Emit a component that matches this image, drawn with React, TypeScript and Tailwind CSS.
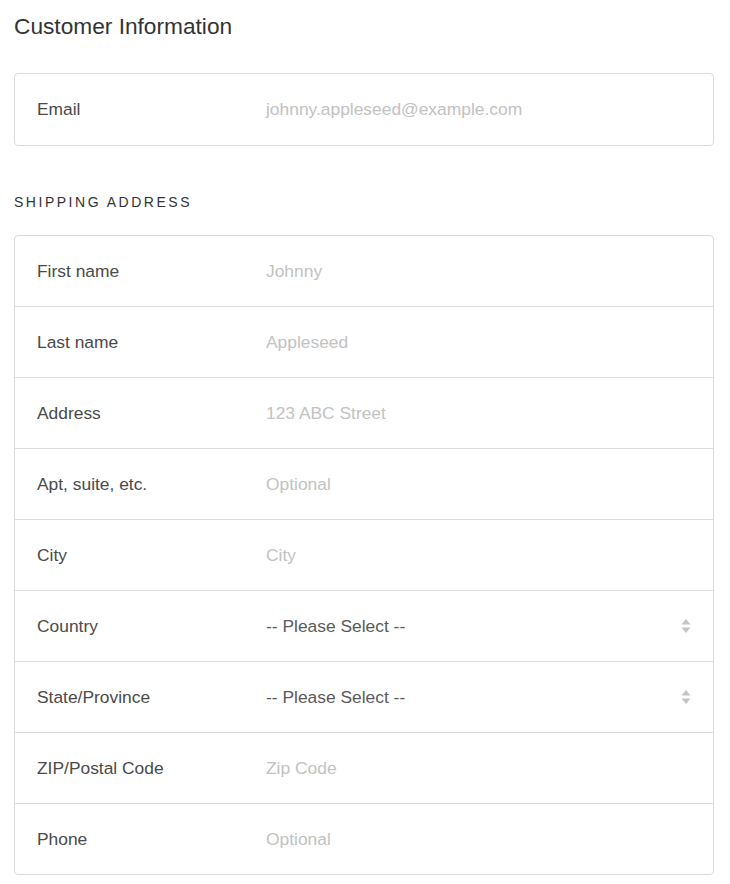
import React from 'react';

type Field = {
  label: string;
  placeholder: string;
  select?: boolean;
};

const shipping: Field[] = [
  { label: 'First name', placeholder: 'Johnny' },
  { label: 'Last name', placeholder: 'Appleseed' },
  { label: 'Address', placeholder: '123 ABC Street' },
  { label: 'Apt, suite, etc.', placeholder: 'Optional' },
  { label: 'City', placeholder: 'City' },
  { label: 'Country', placeholder: '-- Please Select --', select: true },
  { label: 'State/Province', placeholder: '-- Please Select --', select: true },
  { label: 'ZIP/Postal Code', placeholder: 'Zip Code' },
  { label: 'Phone', placeholder: 'Optional' },
];

const SelectArrows = () => (
  <svg width="10" height="16" viewBox="0 0 10 16" className="shrink-0">
    <path d="M5 1 L9.5 6.5 H0.5 Z" fill="#c4c4c4" />
    <path d="M0.5 9.5 H9.5 L5 15 Z" fill="#c4c4c4" />
  </svg>
);

const Row = ({ field, className }: { field: Field; className: string }) => (
  <div className={`flex items-center pl-[22px] pr-[22px] ${className}`}>
    <span className="w-[229px] shrink-0 text-[#4a4a4a]">{field.label}</span>
    {field.select ? (
      <div className="flex-1 flex items-center justify-between">
        <span className="text-[#5a5a5a]">{field.placeholder}</span>
        <SelectArrows />
      </div>
    ) : (
      <span className="flex-1 text-[#c2c2c2]">{field.placeholder}</span>
    )}
  </div>
);

export default function App() {
  return (
    <div
      className="min-h-screen bg-white px-[14px] pt-[12px] text-[17.4px]"
      style={{ fontFamily: '"Liberation Sans", Arial, sans-serif' }}
    >
      <div className="w-[700px]">
        <h1 className="text-[22.7px] leading-[28px] text-[#333]">Customer Information</h1>

        <div className="mt-[33px] rounded-[4px] border border-[#dcdcdc]">
          <Row
            className="h-[71px]"
            field={{ label: 'Email', placeholder: 'johnny.appleseed@example.com' }}
          />
        </div>

        <h2 className="mt-[46px] text-[14px] leading-[20px] tracking-[0.18em] text-[#333]">
          SHIPPING ADDRESS
        </h2>

        <div className="mt-[23px] rounded-[4px] border border-[#dcdcdc] divide-y divide-[#dcdcdc]">
          {shipping.map(f => (
            <Row key={f.label} className="box-content h-[70px]" field={f} />
          ))}
        </div>
      </div>
    </div>
  );
}
